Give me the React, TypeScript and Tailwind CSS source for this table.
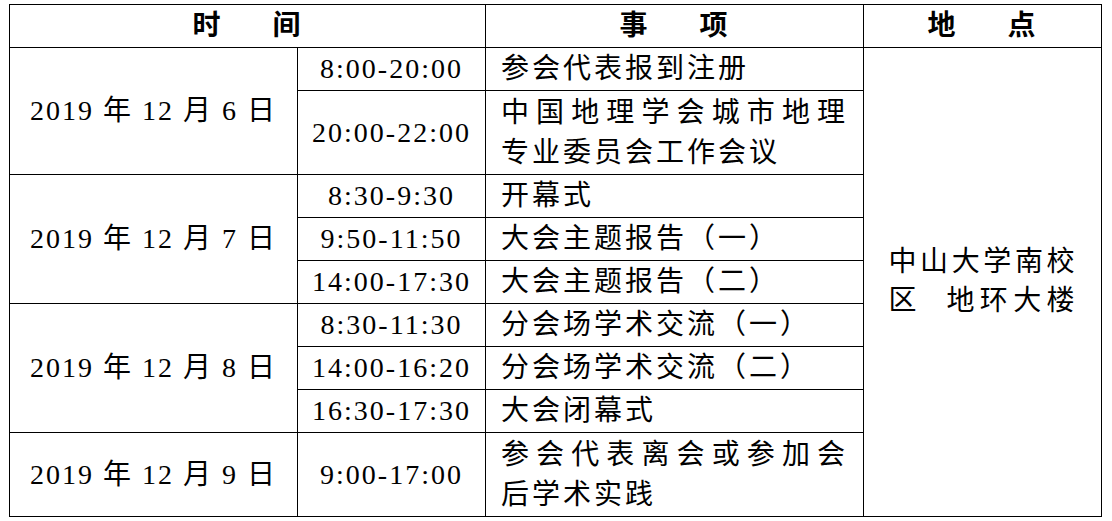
const cell = 'border-[1.5px] border-black p-0 align-middle';

type Slot = { time: string; event: string[] };
type Day = { date: string; slots: Slot[] };

const days: Day[] = [
  {
    date: '2019 年 12 月 6 日',
    slots: [
      { time: '8:00-20:00', event: ['参会代表报到注册'] },
      { time: '20:00-22:00', event: ['中国地理学会城市地理', '专业委员会工作会议'] },
    ],
  },
  {
    date: '2019 年 12 月 7 日',
    slots: [
      { time: '8:30-9:30', event: ['开幕式'] },
      { time: '9:50-11:50', event: ['大会主题报告（一）'] },
      { time: '14:00-17:30', event: ['大会主题报告（二）'] },
    ],
  },
  {
    date: '2019 年 12 月 8 日',
    slots: [
      { time: '8:30-11:30', event: ['分会场学术交流（一）'] },
      { time: '14:00-16:20', event: ['分会场学术交流（二）'] },
      { time: '16:30-17:30', event: ['大会闭幕式'] },
    ],
  },
  {
    date: '2019 年 12 月 9 日',
    slots: [{ time: '9:00-17:00', event: ['参会代表离会或参加会', '后学术实践'] }],
  },
];

function Event({ lines }: { lines: string[] }) {
  if (lines.length === 1) {
    return <div className="pl-[15px] pr-[15px] leading-[40px] tracking-[3px] whitespace-nowrap">{lines[0]}</div>;
  }
  return (
    <div className="pl-[15px] pr-[15px] leading-[40px] tracking-[3px]">
      <div className="text-justify [text-align-last:justify] whitespace-nowrap">{lines[0]}</div>
      <div className="whitespace-nowrap">{lines[1]}</div>
    </div>
  );
}

export default function App() {
  const totalSlots = days.reduce((n, d) => n + d.slots.length, 0);
  return (
    <div className="min-h-screen bg-white pl-[9px] pt-[4px] text-black font-['Liberation_Serif','Noto_Sans_CJK_SC',serif] text-[28px] tracking-[2px]">
      <table className="w-[1092px] table-fixed border-collapse">
        <colgroup>
          <col className="w-[288px]" />
          <col className="w-[188px]" />
          <col className="w-[378px]" />
          <col className="w-[238px]" />
        </colgroup>
        <thead>
          <tr className="h-[43px]">
            <th colSpan={2} className={cell}>
              <div className="flex justify-center gap-[50px] font-bold leading-[40px]">
                <span>时</span>
                <span>间</span>
              </div>
            </th>
            <th className={cell}>
              <div className="flex justify-center gap-[50px] font-bold leading-[40px]">
                <span>事</span>
                <span>项</span>
              </div>
            </th>
            <th className={cell}>
              <div className="flex justify-center gap-[50px] font-bold leading-[40px]">
                <span>地</span>
                <span>点</span>
              </div>
            </th>
          </tr>
        </thead>
        <tbody>
          {days.map((day, di) =>
            day.slots.map((slot, si) => (
              <tr key={`${di}-${si}`} className={slot.event.length > 1 ? 'h-[84px]' : 'h-[43px]'}>
                {si === 0 && (
                  <td rowSpan={day.slots.length} className={`${cell} text-center`}>
                    {day.date}
                  </td>
                )}
                <td className={`${cell} text-center whitespace-nowrap`}>{slot.time}</td>
                <td className={cell}>
                  <Event lines={slot.event} />
                </td>
                {di === 0 && si === 0 && (
                  <td rowSpan={totalSlots} className={`${cell} text-center`}>
                    <div className="inline-block w-[188px] leading-[39px]">
                      <div className="text-justify [text-align-last:justify] whitespace-nowrap">中山大学南校</div>
                      <div className="text-justify [text-align-last:justify] whitespace-nowrap">区&nbsp;&nbsp;地环大楼</div>
                    </div>
                  </td>
                )}
              </tr>
            )),
          )}
        </tbody>
      </table>
    </div>
  );
}
